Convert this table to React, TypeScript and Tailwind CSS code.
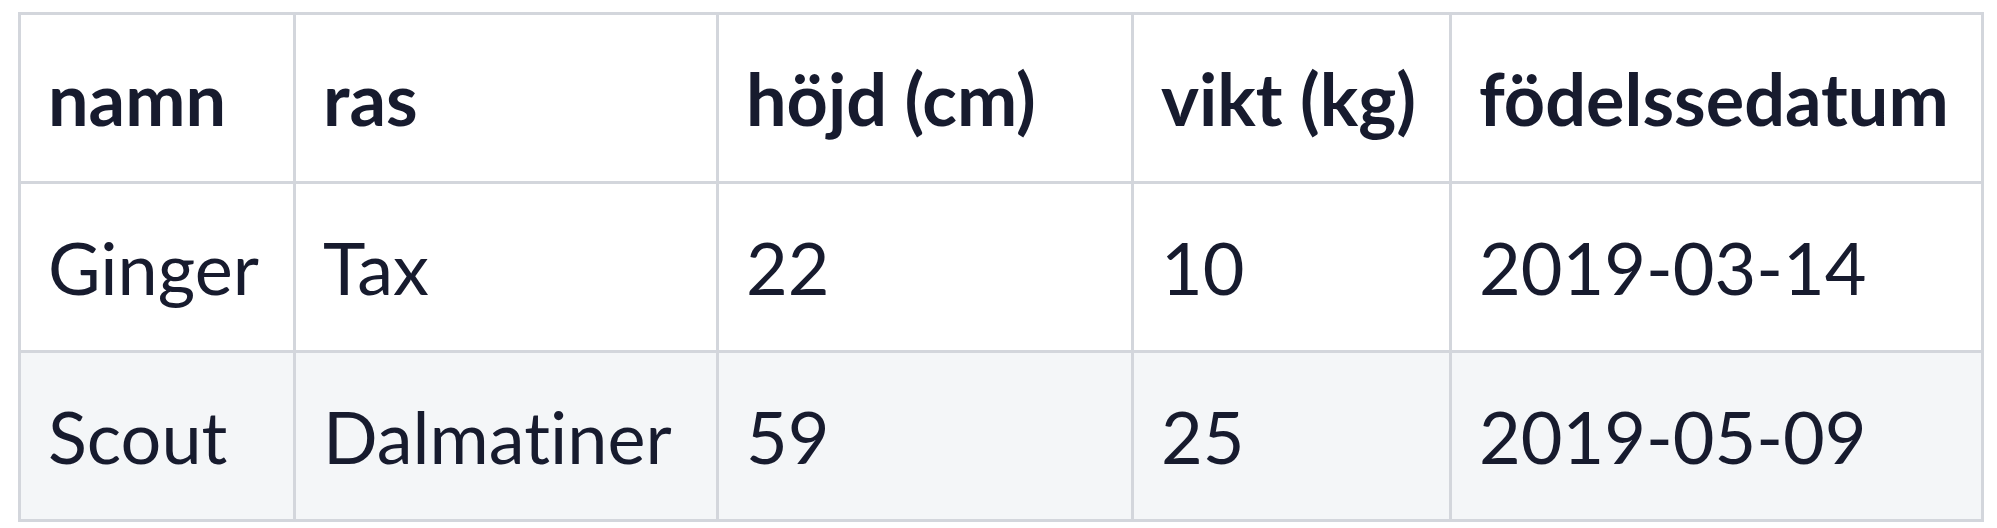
const columns = ["namn", "ras", "höjd (cm)", "vikt (kg)", "födelssedatum"];

const rows = [
  ["Ginger", "Tax", "22", "10", "2019-03-14"],
  ["Scout", "Dalmatiner", "59", "25", "2019-05-09"],
];

const widths = ["w-[275px]", "w-[423px]", "w-[415px]", "w-[318px]", "w-[532px]"];

export default function App() {
  return (
    <div className="min-h-screen bg-white pl-[18px] pt-[12px] font-['Lato','Open_Sans',sans-serif] text-[#171b2e] [font-variant-ligatures:none]">
      <table className="table-fixed border-collapse border-[3px] border-[#d3d6dc] text-[72px] leading-[108px]">
        <colgroup>
          {widths.map((w, i) => (
            <col key={i} className={w} />
          ))}
        </colgroup>
        <thead>
          <tr className="bg-white">
            {columns.map((c) => (
              <th
                key={c}
                className="border-[3px] border-[#d3d6dc] pl-[27px] pr-[29px] py-[29px] text-left font-bold whitespace-nowrap"
              >
                {c}
              </th>
            ))}
          </tr>
        </thead>
        <tbody>
          {rows.map((r, i) => (
            <tr key={i} className={i % 2 === 1 ? "bg-[#f4f6f8]" : "bg-white"}>
              {r.map((v, j) => (
                <td
                  key={j}
                  className="border-[3px] border-[#d3d6dc] pl-[27px] pr-[29px] py-[29px] font-normal whitespace-nowrap"
                >
                  {v}
                </td>
              ))}
            </tr>
          ))}
        </tbody>
      </table>
    </div>
  );
}
